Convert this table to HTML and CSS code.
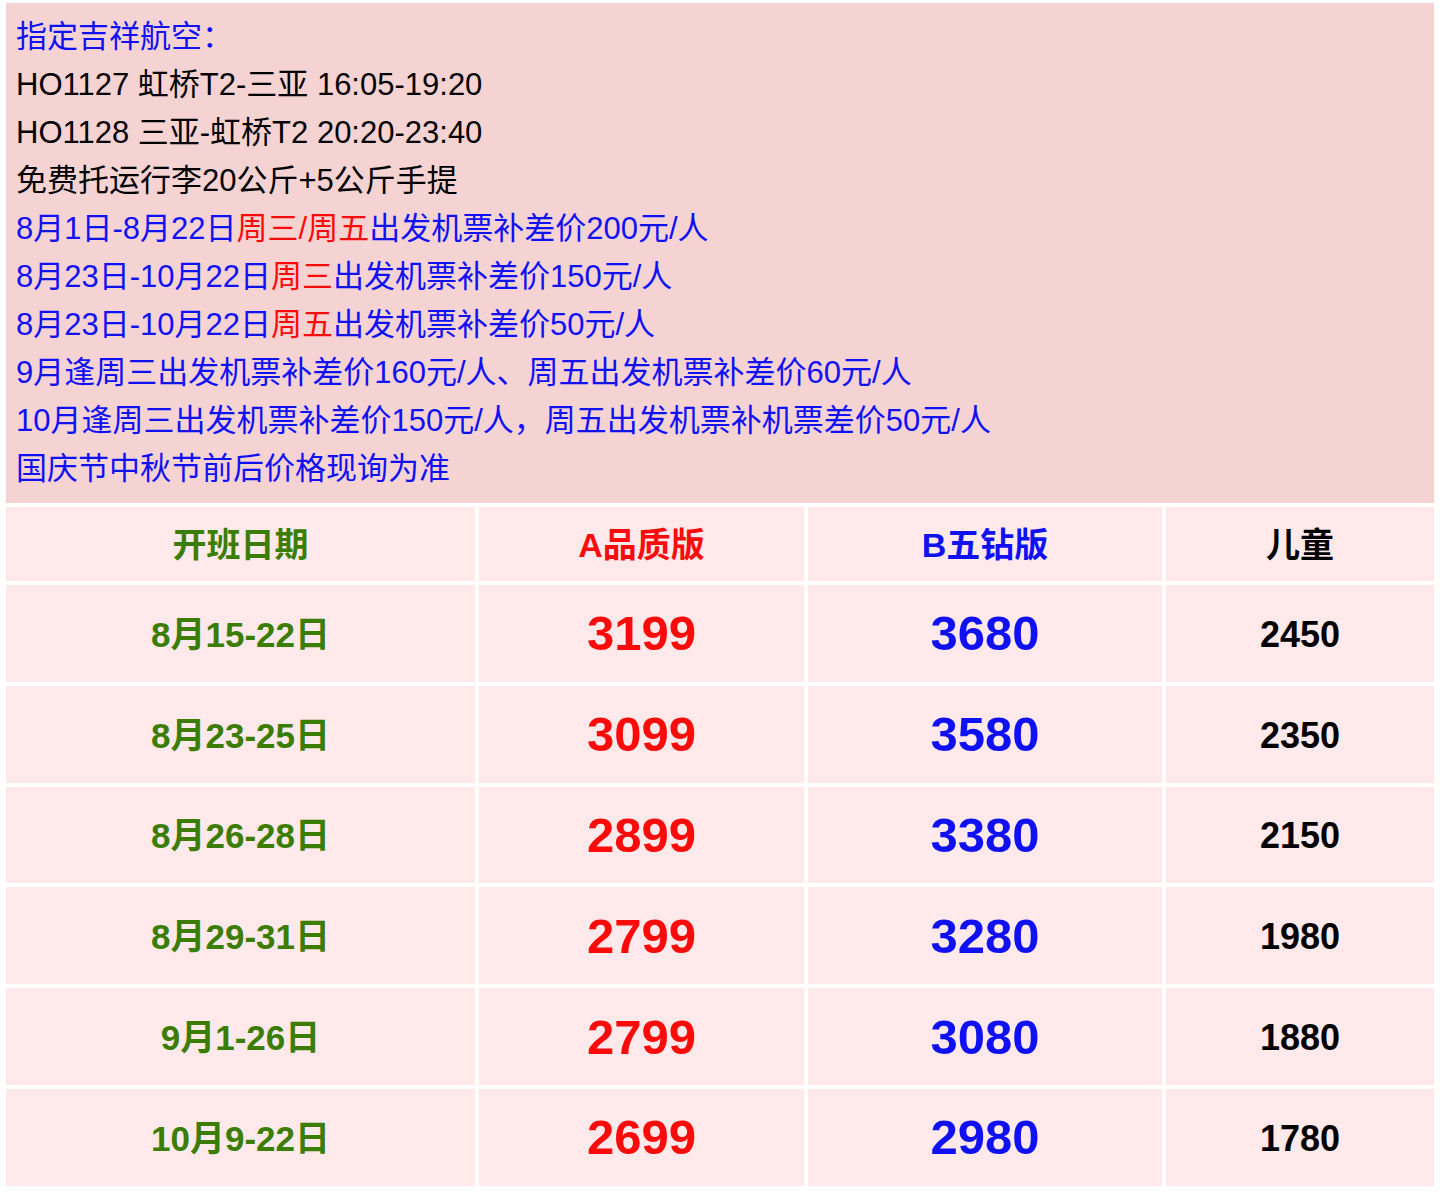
FILE: index.html
```html
<!DOCTYPE html>
<html lang="zh-CN">
<head>
<meta charset="utf-8">
<title>吉祥航空 三亚</title>
<link rel="stylesheet" href="styles.css">
</head>
<body>
<div class="page">
  <section class="notice">
    <p class="blue">指定吉祥航空：</p>
    <p>HO1127 虹桥T2-三亚 16:05-19:20</p>
    <p>HO1128 三亚-虹桥T2 20:20-23:40</p>
    <p>免费托运行李20公斤+5公斤手提</p>
    <p class="blue">8月1日-8月22日<span class="red">周三/周五</span>出发机票补差价200元/人</p>
    <p class="blue">8月23日-10月22日<span class="red">周三</span>出发机票补差价150元/人</p>
    <p class="blue">8月23日-10月22日<span class="red">周五</span>出发机票补差价50元/人</p>
    <p class="blue">9月逢周三出发机票补差价160元/人、周五出发机票补差价60元/人</p>
    <p class="blue">10月逢周三出发机票补差价150元/人，周五出发机票补机票差价50元/人</p>
    <p class="blue">国庆节中秋节前后价格现询为准</p>
  </section>
  <div class="prices">
    <div class="cell head green">开班日期</div>
    <div class="cell head red">A品质版</div>
    <div class="cell head blue">B五钻版</div>
    <div class="cell head black">儿童</div>

    <div class="cell date">8月15-22日</div>
    <div class="cell num red">3199</div>
    <div class="cell num blue">3680</div>
    <div class="cell kid">2450</div>

    <div class="cell date">8月23-25日</div>
    <div class="cell num red">3099</div>
    <div class="cell num blue">3580</div>
    <div class="cell kid">2350</div>

    <div class="cell date">8月26-28日</div>
    <div class="cell num red">2899</div>
    <div class="cell num blue">3380</div>
    <div class="cell kid">2150</div>

    <div class="cell date">8月29-31日</div>
    <div class="cell num red">2799</div>
    <div class="cell num blue">3280</div>
    <div class="cell kid">1980</div>

    <div class="cell date">9月1-26日</div>
    <div class="cell num red">2799</div>
    <div class="cell num blue">3080</div>
    <div class="cell kid">1880</div>

    <div class="cell date">10月9-22日</div>
    <div class="cell num red">2699</div>
    <div class="cell num blue">2980</div>
    <div class="cell kid">1780</div>
  </div>
</div>
</body>
</html>
```

FILE: styles.css
```css
html, body {
  margin: 0;
  padding: 0;
  background: #ffffff;
}

body {
  font-family: "Liberation Sans", "Noto Sans CJK SC", sans-serif;
  color: #000000;
}

.page {
  padding: 3px 6px;
  width: 1428px;
  display: flex;
  flex-direction: column;
  gap: 4px;
}

.notice {
  background: #f5d3d3;
  padding: 10px 10px 10px 10px;
  height: 480px;
  font-size: 31px;
  line-height: 48px;
}

.notice p {
  margin: 0;
  white-space: nowrap;
}

.blue { color: #1010f5; }
.red { color: #ff0a0a; }
.green { color: #3b7d00; }
.black { color: #000000; }

.prices {
  display: grid;
  grid-template-columns: 469px 325px 354px 268px;
  grid-template-rows: 74px repeat(6, 96.8px);
  gap: 4px;
}

.cell {
  background: #ffe9eb;
  display: flex;
  align-items: center;
  justify-content: center;
  font-weight: bold;
  white-space: nowrap;
}

.head {
  font-size: 34px;
  padding-bottom: 3px;
}

.date {
  font-size: 35px;
  color: #3b7d00;
  padding-bottom: 4px;
}

.num {
  font-size: 49px;
}

.kid {
  font-size: 36px;
  color: #000000;
  padding-top: 3px;
}
```
